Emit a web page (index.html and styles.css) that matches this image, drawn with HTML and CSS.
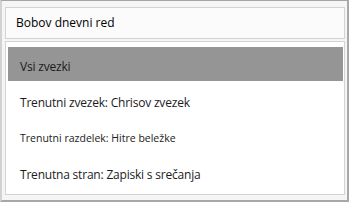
FILE: index.html
```html
<!DOCTYPE html>
<html>
<head>
<meta charset="UTF-8">
<title>Iskanje</title>
<link rel="stylesheet" href="styles.css">
</head>
<body>
<div class="frame">
	<div class="field">Bobov dnevni red</div>
	<ul class="scope">
		<li class="selected">Vsi zvezki</li>
		<li>Trenutni zvezek: Chrisov zvezek</li>
		<li class="small">Trenutni razdelek: Hitre beležke</li>
		<li>Trenutna stran: Zapiski s srečanja</li>
	</ul>
</div>
</body>
</html>
```
FILE: styles.css
```css
html, body {

	margin: 0;
	padding: 0;
	background: #f3f3f3;
}
body {

	font-family: "Open Sans", "Noto Sans", sans-serif;
	font-size: 12px;
	color: #1b1b1b;
}
.frame {

	box-sizing: border-box;
	width: 349px;
	height: 202px;
	padding: 6px 2px 0 3px;
	border-top: 1px solid #a4a4a4;
	border-left: 2px solid #d2d2d2;
	border-right: 2px solid #a8a8a8;
	border-bottom: 2px solid #a8a8a8;
	background: #f5f5f5;
}
.field {

	box-sizing: border-box;
	height: 32px;
	padding: 7px 0 0 10px;
	line-height: 16px;
	border: 1px solid #d3d3d3;
	background: #fbfbfb;
	color: #000;
}
.scope {

	box-sizing: border-box;
	list-style: none;
	margin: 2px 0 0 0;
	padding: 5px 1px 0 2px;
	height: 154px;
	border: 1px solid #d3d3d3;
	background: #fff;
}
.scope li {

	box-sizing: border-box;
	height: 34px;
	margin-bottom: 2px;
	padding: 12px 0 0 12px;
	line-height: 16px;
	letter-spacing: -0.2px;
	white-space: nowrap;
}
.scope li.selected {

	background: #959595;
}
.scope li.small {

	font-size: 10.5px;
	letter-spacing: 0;
	padding-top: 11px;
}
```
